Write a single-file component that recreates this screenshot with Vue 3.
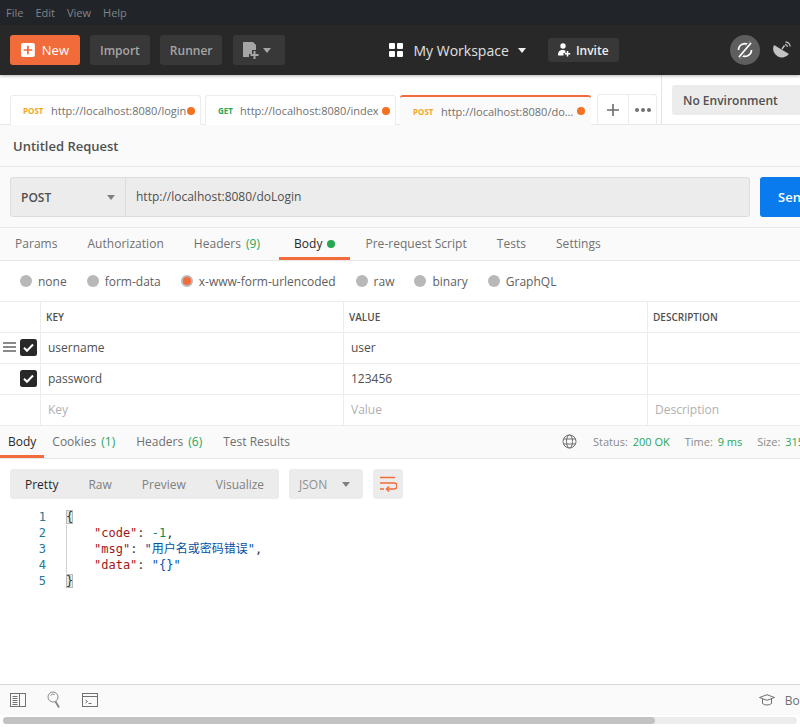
<template>
  <div class="app">
    <div class="menubar">
      <span v-for="m in menus" :key="m">{{ m }}</span>
    </div>

    <div class="header">
      <button class="btn new">
        <svg width="16" height="16" viewBox="0 0 16 16"><rect width="16" height="16" rx="2" fill="#fff" /><path d="M8 3v10M3 8h10" stroke="#f26b3a" stroke-width="2" /></svg>
        New
      </button>
      <button class="btn">Import</button>
      <button class="btn">Runner</button>
      <button class="btn builder">
        <svg width="20" height="18" viewBox="0 0 20 18"><path d="M0 1h10l3 3v5H9v4H6v3H0z" fill="#a5a5a5" /><path d="M11.500 10v8M7.500 14h8" stroke="#a5a5a5" stroke-width="2" /></svg>
        <i class="caret light"></i>
      </button>
      <div class="workspace">
        <svg width="14" height="14" viewBox="0 0 14 14" fill="#fff"><rect width="6" height="6" rx="1" /><rect x="8" width="6" height="6" rx="1" /><rect y="8" width="6" height="6" rx="1" /><rect x="8" y="8" width="6" height="6" rx="1" /></svg>
        <span>My Workspace</span>
        <i class="caret white"></i>
      </div>
      <button class="invite">
        <svg width="13" height="14" viewBox="0 0 13 14" fill="#fff"><circle cx="5" cy="3" r="2.700" /><path d="M0 12.500c0-4 1.500-5.500 5-5.500 1 0 1.800.2 2.400.5V10H5.500v2.500z" /><path d="M9.500 8v5.500M6.800 10.800h5.400" stroke="#fff" stroke-width="1.500" /></svg>
        Invite
      </button>
      <div class="sync">
        <svg width="20" height="20" viewBox="0 0 20 20" fill="none" stroke="#fff" stroke-width="1.700">
          <path d="M3.500 10a6.500 6.500 0 0 1 10.500-5" />
          <path d="M14.500 1.800V5.600H10.700" />
          <path d="M16.500 10a6.500 6.500 0 0 1-10.500 5" />
          <path d="M5.500 18.200V14.400H9.300" />
          <path d="M4 17L16 3" stroke="#5e5e5e" stroke-width="4.500" />
          <path d="M4 17L16 3" stroke-width="1.800" />
        </svg>
      </div>
      <svg class="satellite" width="18" height="18" viewBox="0 0 18 18">
        <path d="M16 13L1 4A8.800 8.800 0 0 0 16 13z" fill="#c4c4c4" />
        <path d="M9 8l2.500-3.500" stroke="#c4c4c4" stroke-width="1.400" />
        <path d="M12 3.300a3 3 0 0 1 2.500 2.500M12.500.8a5.500 5.500 0 0 1 4.700 4.700" fill="none" stroke="#c4c4c4" stroke-width="1.200" />
      </svg>
    </div>

    <div class="tabstrip">
      <div v-for="t in tabs" :key="t.url" class="tab" :class="{ active: t.active }">
        <span class="verb" :class="t.verb.toLowerCase()">{{ t.verb }}</span>
        <span class="tab-url">{{ t.url }}</span>
        <i class="dot"></i>
      </div>
      <div class="tab-tools">
        <span class="plus">
          <svg width="12" height="12" viewBox="0 0 12 12"><path d="M6 0v12M0 6h12" stroke="#6b6b6b" stroke-width="1.600" /></svg>
        </span>
        <span class="more"><i></i><i></i><i></i></span>
      </div>
      <div class="env-wrap">
        <div class="env">No Environment</div>
      </div>
    </div>

    <div class="reqname">Untitled Request</div>

    <div class="urlrow">
      <div class="urlbox">
        <div class="method">POST <i class="caret grey"></i></div>
        <div class="urltext">http://localhost:8080/doLogin</div>
      </div>
      <button class="send">Send</button>
    </div>

    <div class="reqtabs">
      <span class="rt">Params</span>
      <span class="rt">Authorization</span>
      <span class="rt">Headers <em>(9)</em></span>
      <span class="rt on">Body <i class="gdot"></i></span>
      <span class="rt">Pre-request Script</span>
      <span class="rt">Tests</span>
      <span class="rt">Settings</span>
    </div>

    <div class="radios">
      <label v-for="r in radios" :key="r" class="radio">
        <i :class="{ sel: r === 'x-www-form-urlencoded' }"></i>{{ r }}
      </label>
    </div>

    <div class="kv">
      <div class="kv-row head">
        <div class="c0"></div>
        <div class="c1">KEY</div>
        <div class="c2">VALUE</div>
        <div class="c3">DESCRIPTION</div>
      </div>
      <div v-for="(p, i) in params" :key="p.k" class="kv-row">
        <div class="c0">
          <span class="drag" :class="{ hide: i > 0 }"><i></i><i></i><i></i></span>
          <svg width="17" height="17" viewBox="0 0 17 17"><rect width="17" height="17" rx="2.500" fill="#282828" /><path d="M4 8.800l3 3 6-6.300" fill="none" stroke="#fff" stroke-width="2" /></svg>
        </div>
        <div class="c1">{{ p.k }}</div>
        <div class="c2">{{ p.v }}</div>
        <div class="c3"></div>
      </div>
      <div class="kv-row ph">
        <div class="c0"></div>
        <div class="c1">Key</div>
        <div class="c2">Value</div>
        <div class="c3">Description</div>
      </div>
    </div>

    <div class="restabs">
      <span class="rs on">Body</span>
      <span class="rs">Cookies <em>(1)</em></span>
      <span class="rs">Headers <em>(6)</em></span>
      <span class="rs">Test Results</span>
      <div class="meta">
        <svg width="15" height="15" viewBox="0 0 15 15" fill="none" stroke="#6e6e6e"><circle cx="7.500" cy="7.500" r="6.500" /><ellipse cx="7.500" cy="7.500" rx="3" ry="6.500" /><path d="M1.500 5h12M1.500 10h12" /></svg>
        <span class="stat first">Status: <b>200 OK</b></span>
        <span class="stat">Time: <b>9 ms</b></span>
        <span class="stat">Size: <b>315 B</b></span>
      </div>
    </div>

    <div class="viewbar">
      <div class="modes">
        <span class="on">Pretty</span>
        <span>Raw</span>
        <span>Preview</span>
        <span>Visualize</span>
      </div>
      <div class="lang">JSON <i class="caret grey"></i></div>
      <div class="wrapbtn">
        <svg width="18" height="16" viewBox="0 0 18 16" fill="none" stroke="#f26b3a" stroke-width="1.500"><path d="M1 1.500h15M1 7h14a2.500 2.500 0 0 1 0 6H8" /><path d="M1 13h4" /><path d="M10 10.500L7.500 13l2.500 2.500" /></svg>
      </div>
    </div>

    <div class="code">
      <div class="nums"><span v-for="n in 5" :key="n">{{ n }}</span></div>
      <div class="lines">
        <div><span class="br">{</span></div>
        <div class="ind"><span class="key">"code"</span>: <span class="num">-1</span>,</div>
        <div class="ind"><span class="key">"msg"</span>: <span class="str">"用户名或密码错误"</span>,</div>
        <div class="ind"><span class="key">"data"</span>: <span class="str">"{}"</span></div>
        <div><span class="br">}</span></div>
      </div>
    </div>

    <div class="statusbar">
      <svg width="16" height="14" viewBox="0 0 16 14" fill="none" stroke="#707070"><rect x=".5" y=".5" width="15" height="13" /><path d="M9.500 .5v13M2.500 3.500h5M2.500 5.500h5M2.500 7.500h5M2.500 9.500h5M2.500 11.500h5" /></svg>
      <svg width="14" height="18" viewBox="0 0 14 18" fill="none" stroke="#8a8a8a"><circle cx="6" cy="6" r="5" /><path d="M3.500 4.500a3 3 0 0 1 4-1" /><path d="M8.500 10.500l3.500 6" stroke-width="2" /></svg>
      <svg width="16" height="14" viewBox="0 0 16 14" fill="none" stroke="#707070"><rect x=".5" y=".5" width="15" height="13" /><path d="M.5 3.500h15M3.500 7l2 1.500-2 1.500M6.500 10.500h3" /></svg>
      <div class="boot">
        <svg width="16" height="12" viewBox="0 0 16 12" fill="none" stroke="#6e6e6e"><path d="M.5 3.500L8 .7l7.500 2.800L8 6.300z" /><path d="M3.500 5v4.500c2 2 7 2 9 0V5" /></svg>
        <span>Bootcamp</span>
      </div>
    </div>

    <div class="scrolltrack">
      <div class="track"><div class="thumb"></div></div>
    </div>
  </div>
</template>

<script setup>
const menus = ['File', 'Edit', 'View', 'Help']
const tabs = [
  { verb: 'POST', url: 'http://localhost:8080/login' },
  { verb: 'GET', url: 'http://localhost:8080/index' },
  { verb: 'POST', url: 'http://localhost:8080/doLogin', active: true }
]
const radios = ['none', 'form-data', 'x-www-form-urlencoded', 'raw', 'binary', 'GraphQL']
const params = [
  { k: 'username', v: 'user' },
  { k: 'password', v: '123456' }
]
</script>

<style>
html, body { margin: 0; overflow: hidden; background: #fff; }
</style>

<style scoped>
.app {
  width: 800px;
  height: 727px;
  overflow: hidden;
  display: flex;
  flex-direction: column;
  font-family: "Open Sans", "Noto Sans CJK SC", sans-serif;
  font-size: 12px;
  color: #505050;
  background: #fff;
}
i { display: block; font-style: normal; }
em { font-style: normal; color: #26a65b; }
button { font-family: inherit; border: none; cursor: pointer; }

.caret { width: 0; height: 0; border-left: 4px solid transparent; border-right: 4px solid transparent; border-top: 5px solid; }
.caret.light { border-top-color: #a5a5a5; }
.caret.white { border-top-color: #f0f0f0; }
.caret.grey { border-top-color: #808080; }

.menubar {
  height: 25px;
  flex: none;
  background: #212529;
  display: flex;
  align-items: center;
  gap: 12px;
  padding: 0 6px 0;
  color: #808488;
  font-size: 11px;
  box-sizing: border-box;
}

.header {
  height: 50px;
  flex: none;
  background: #282828;
  display: flex;
  align-items: center;
  padding-left: 10px;
  box-shadow: 0 1px 3px rgba(0, 0, 0, .3);
  position: relative;
}
.btn {
  height: 30px;
  padding: 0 10px;
  margin-right: 10px;
  background: #383838;
  color: #a5a5a5;
  font-size: 12px;
  font-weight: 600;
  border-radius: 3px;
  display: flex;
  align-items: center;
}
.btn.new {
  width: 70px;
  background: #f26b3a;
  color: #fff;
  font-weight: 400;
  gap: 7px;
  padding: 0 11px;
  font-size: 13px;
}
.btn.builder { width: 52px; padding: 0 10px; box-sizing: border-box; margin-left: 1px; }
.workspace {
  display: flex;
  align-items: center;
  margin-left: 94px;
  color: #e0e0e0;
  font-size: 14px;
}
.workspace span { margin: 0 9px 0 10px; }
.invite {
  margin-left: 22px;
  width: 71px;
  height: 24px;
  background: #383838;
  color: #f0f0f0;
  font-size: 12px;
  font-weight: 600;
  border-radius: 3px;
  display: flex;
  align-items: center;
  justify-content: center;
  gap: 5px;
  padding: 0;
}
.sync {
  margin-left: 111px;
  width: 30px;
  height: 30px;
  border-radius: 50%;
  background: #5e5e5e;
  display: flex;
  align-items: center;
  justify-content: center;
}
.satellite { margin-left: 13px; }

.tabstrip {
  height: 50px;
  flex: none;
  display: flex;
  align-items: flex-end;
  padding-left: 10px;
  gap: 4px;
  border-bottom: 1px solid #e8e8e8;
  box-sizing: border-box;
}
.tab {
  width: 191px;
  height: 30px;
  flex: none;
  box-sizing: border-box;
  background: #fff;
  border: 1px solid #ececec;
  border-bottom: none;
  border-radius: 3px 3px 0 0;
  display: flex;
  align-items: center;
  padding: 0 5px 0 12px;
  margin-bottom: -1px;
  font-size: 11px;
}
.tab.active {
  border: none;
  border-top: 2px solid #f26b3a;
  background: #fafafa;
  padding: 0 6px 0 13px;
}
.verb { font-size: 8px; font-weight: 700; width: 28px; flex: none; }
.verb.post { color: #f5a623; }
.verb.get { color: #26a65b; width: 22px; }
.tab-url { flex: 1; min-width: 0; overflow: hidden; text-overflow: ellipsis; white-space: nowrap; color: #707070; }
.dot { width: 8px; height: 8px; flex: none; border-radius: 50%; background: #f47023; }

.tab-tools {
  width: 60px;
  height: 30px;
  flex: none;
  box-sizing: border-box;
  margin-left: 2px;
  border: 1px solid #ececec;
  border-bottom: none;
  border-radius: 3px 3px 0 0;
  display: flex;
}
.plus { width: 30px; display: flex; align-items: center; justify-content: center; border-right: 1px solid #ececec; }
.more { flex: 1; display: flex; align-items: center; justify-content: center; gap: 2px; }
.more i { width: 4px; height: 4px; border-radius: 50%; background: #707070; }

.env-wrap {
  height: 49px;
  flex: none;
  width: 140px;
  border-left: 1px solid #e4e4e4;
  padding: 10px 0 0 10px;
  box-sizing: border-box;
  margin-right: -10px;
}
.env {
  width: 160px;
  height: 30px;
  line-height: 31px;
  background: #ececec;
  border-radius: 3px;
  padding-left: 11px;
  font-size: 12px;
  font-weight: 600;
  color: #505050;
}

.reqname {
  height: 42px;
  line-height: 42px;
  flex: none;
  box-sizing: border-box;
  padding-left: 13px;
  background: #fafafa;
  border-bottom: 1px solid #e8e8e8;
  font-size: 13px;
  font-weight: 600;
  color: #505050;
}

.urlrow {
  height: 61px;
  flex: none;
  box-sizing: border-box;
  padding: 10px 0 0 10px;
  background: #fafafa;
  border-bottom: 1px solid #e8e8e8;
  display: flex;
}
.urlbox {
  width: 740px;
  height: 40px;
  flex: none;
  box-sizing: border-box;
  border: 1px solid #dcdcdc;
  border-radius: 3px;
  background: #ececec;
  display: flex;
}
.method {
  width: 115px;
  box-sizing: border-box;
  border-right: 1px solid #dcdcdc;
  display: flex;
  align-items: center;
  justify-content: space-between;
  padding: 0 10px;
  font-size: 12px;
  font-weight: 600;
}
.urltext { padding-left: 10px; line-height: 37px; font-size: 12px; color: #505050; }
.send {
  margin-left: 10px;
  width: 80px;
  height: 40px;
  flex: none;
  background: #097bed;
  color: #fff;
  font-size: 13px;
  font-weight: 600;
  border-radius: 3px;
  text-align: left;
  padding-left: 18px;
}

.reqtabs {
  height: 33px;
  flex: none;
  box-sizing: border-box;
  display: flex;
  background: #fafafa;
  border-bottom: 1px solid #e8e8e8;
  padding-left: 15px;
  gap: 30px;
}
.rt {
  height: 32px;
  line-height: 31px;
  color: #707070;
  box-sizing: border-box;
  display: flex;
  align-items: flex-start;
  gap: 5px;
  white-space: nowrap;
  letter-spacing: .03px;
}
.rt.on {
  color: #282828;
  border-bottom: 3px solid #f26b3a;
  margin: 0 -15px 0 -11px;
  padding: 0 15px;
}
.gdot { width: 8px; height: 8px; border-radius: 50%; background: #26a651; margin-top: 12px; }

.radios {
  height: 40px;
  flex: none;
  display: flex;
  align-items: center;
  padding-left: 20px;
  gap: 20px;
  color: #606060;
}
.radio { display: flex; align-items: center; gap: 6px; }
.radio i { width: 12px; height: 12px; border-radius: 50%; background: #b8b8b8; box-sizing: border-box; }
.radio i.sel { background: #f26b3a; border: 2px solid #b8b8b8; }

.kv { flex: none; border-top: 1px solid #ececec; }
.kv-row {
  height: 31px;
  box-sizing: border-box;
  display: grid;
  grid-template-columns: 41px 303px 304px 1fr;
  border-bottom: 1px solid #ececec;
  align-items: stretch;
}
.kv-row > div {
  display: flex;
  align-items: center;
  padding-left: 7px;
  padding-bottom: 2px;
  border-right: 1px solid #ececec;
  box-sizing: border-box;
  white-space: nowrap;
}
.kv-row > .c0 { padding-left: 3px; gap: 4px; }
.kv-row > .c3 { border-right: none; }
.kv-row.head > div { font-size: 10px; font-weight: 600; color: #505050; padding-left: 5px; padding-bottom: 1px; }
.kv-row.ph > div { color: #b0b0b0; }
.drag { width: 13px; display: flex; flex-direction: column; gap: 2px; }
.drag i { height: 2px; background: #8a8a8a; }
.drag.hide { visibility: hidden; }

.restabs {
  height: 33px;
  flex: none;
  box-sizing: border-box;
  display: flex;
  background: #fafafa;
  border-bottom: 1px solid #e8e8e8;
  padding-left: 8px;
  gap: 21px;
}
.rs { line-height: 31px; color: #707070; white-space: nowrap; height: 32px; box-sizing: border-box; }
.rs em { margin-left: 2px; }
.rs.on {
  color: #282828;
  margin-left: -8px;
  padding: 0 8px;
  margin-right: -13px;
  border-bottom: 3px solid #f26b3a;
}
.meta {
  margin-left: auto;
  display: flex;
  align-items: center;
  gap: 15px;
  font-size: 11px;
  margin-right: -14px;
  padding-bottom: 1px;
  white-space: nowrap;
  color: #8a8a8a;
}
.stat.first { margin-left: 1px; }
.stat b { font-weight: 400; color: #26a65b; margin-left: 2px; }

.viewbar {
  flex: none;
  display: flex;
  gap: 10px;
  padding: 10px 0 0 10px;
}
.modes {
  width: 269px;
  height: 30px;
  background: #ececec;
  border-radius: 3px;
  display: flex;
  align-items: center;
  padding-left: 15px;
  box-sizing: border-box;
  gap: 30px;
  color: #808080;
}
.modes .on { color: #282828; }
.lang {
  width: 74px;
  height: 30px;
  box-sizing: border-box;
  background: #ececec;
  border-radius: 3px;
  display: flex;
  align-items: center;
  justify-content: space-between;
  padding: 0 13px 0 10px;
  color: #909090;
}
.wrapbtn {
  width: 30px;
  height: 30px;
  background: #ececec;
  border-radius: 3px;
  display: flex;
  align-items: center;
  justify-content: center;
}

.code {
  flex: 1;
  display: flex;
  padding-top: 10px;
  font-family: "DejaVu Sans Mono", "Noto Sans CJK SC", monospace;
  font-size: 12px;
  line-height: 16px;
  color: #333;
}
.nums { width: 46px; flex: none; text-align: right; color: #237893; display: flex; flex-direction: column; }
.lines { margin-left: 20px; position: relative; }
.lines::before { content: ""; position: absolute; left: 0; top: 16px; height: 48px; width: 1px; background: #d0d0d0; }
.ind { padding-left: 28px; white-space: nowrap; }
.br { background: #e4ebe4; outline: 1px solid #b8b8b8; outline-offset: -1px; }
.key { color: #a31515; }
.num { color: #098658; }
.str { color: #0451a5; }

.statusbar {
  height: 31px;
  flex: none;
  box-sizing: border-box;
  background: #fafafa;
  border-top: 1px solid #d8d8d8;
  display: flex;
  align-items: center;
  padding-left: 10px;
  gap: 21px;
}
.boot { margin-left: auto; display: flex; align-items: center; gap: 10px; margin-right: -42px; color: #707070; white-space: nowrap; }

.scrolltrack {
  height: 12px;
  flex: none;
  box-sizing: border-box;
  padding: 2px 3px 3px;
  background: #fff;
}
.track { height: 7px; background: #ececec; border-radius: 4px; }
.thumb { height: 7px; width: 652px; background: #c2c2c2; border-radius: 4px; }
</style>
